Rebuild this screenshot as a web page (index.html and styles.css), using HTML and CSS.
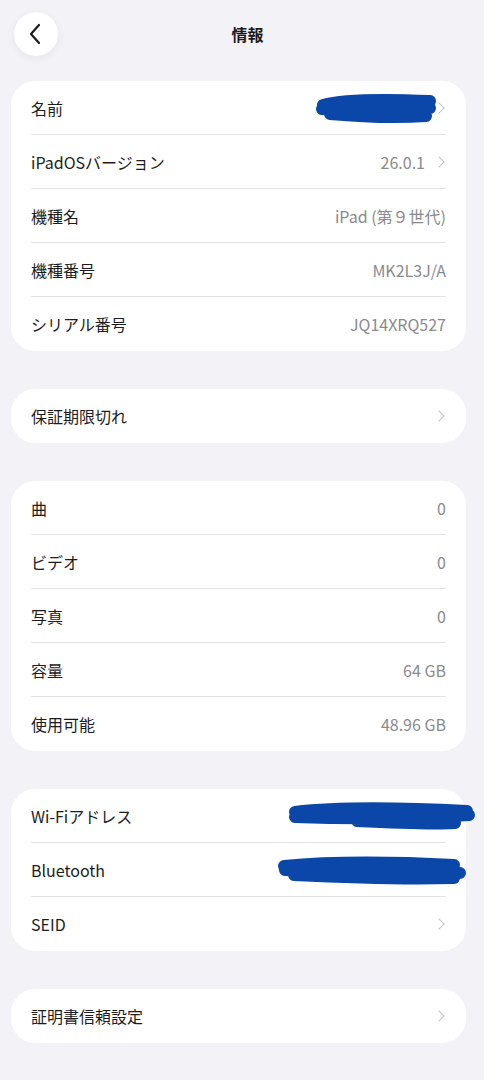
FILE: index.html
```html
<!DOCTYPE html>
<html lang="ja">
<head>
    <meta charset="UTF-8">
    <meta name="viewport" content="width=device-width, initial-scale=1.0">
    <title>情報</title>
    <link rel="stylesheet" href="styles.css">
</head>
<body>
    <div class="page">
        <!-- Navigation bar -->
        <div class="nav">
            <div class="back">
                <svg width="14" height="22" viewBox="0 0 14 22"><path d="M11 2 L3 11 L11 20" fill="none" stroke="#1c1c1e" stroke-width="2.2" stroke-linecap="round" stroke-linejoin="round"/></svg>
            </div>
            <div class="title">情報</div>
        </div>

        <div class="group">
            <div class="row">
                <div class="label">名前</div>
                <div class="value"><span class="chev"></span></div>
                <svg class="scribble s-name" width="126" height="32" viewBox="0 0 126 32">
                    <path d="M9 12 C30 6 70 6 116 8 M8 16 C45 19 80 18 116 15 M16 21 C50 24 85 25 112 23" fill="none" stroke="#0a47a8" stroke-width="12" stroke-linecap="round"/>
                </svg>
            </div>
            <div class="row">
                <div class="label">iPadOSバージョン</div>
                <div class="value">26.0.1<span class="chev"></span></div>
            </div>
            <div class="row">
                <div class="label">機種名</div>
                <div class="value">iPad (第９世代)</div>
            </div>
            <div class="row">
                <div class="label">機種番号</div>
                <div class="value">MK2L3J/A</div>
            </div>
            <div class="row">
                <div class="label">シリアル番号</div>
                <div class="value">JQ14XRQ527</div>
            </div>
        </div>

        <div class="group">
            <div class="row">
                <div class="label">保証期限切れ</div>
                <div class="value"><span class="chev"></span></div>
            </div>
        </div>

        <div class="group">
            <div class="row">
                <div class="label">曲</div>
                <div class="value">0</div>
            </div>
            <div class="row">
                <div class="label">ビデオ</div>
                <div class="value">0</div>
            </div>
            <div class="row">
                <div class="label">写真</div>
                <div class="value">0</div>
            </div>
            <div class="row">
                <div class="label">容量</div>
                <div class="value">64 GB</div>
            </div>
            <div class="row">
                <div class="label">使用可能</div>
                <div class="value">48.96 GB</div>
            </div>
        </div>

        <div class="group">
            <div class="row">
                <div class="label">Wi-Fiアドレス</div>
                <div class="value"></div>
                <svg class="scribble s-wifi" width="190" height="32" viewBox="0 0 190 32">
                    <path d="M8 12 C50 7 100 7 180 11 M8 17 C60 19 120 19 182 15 M70 21 C110 23 150 24 168 23" fill="none" stroke="#0a47a8" stroke-width="12" stroke-linecap="round"/>
                </svg>
            </div>
            <div class="row">
                <div class="label">Bluetooth</div>
                <div class="value"></div>
                <svg class="scribble s-bt" width="192" height="32" viewBox="0 0 192 32">
                    <path d="M8 11 C60 6 120 7 178 10 M9 15 C60 18 130 18 184 18 M18 20 C80 23 140 24 178 23" fill="none" stroke="#0a47a8" stroke-width="12" stroke-linecap="round"/>
                </svg>
            </div>
            <div class="row">
                <div class="label">SEID</div>
                <div class="value"><span class="chev"></span></div>
            </div>
        </div>

        <div class="group">
            <div class="row">
                <div class="label">証明書信頼設定</div>
                <div class="value"><span class="chev"></span></div>
            </div>
        </div>
    </div>
</body>
</html>
```
FILE: styles.css
```css
body {
    margin: 0;
    background-color: #f2f2f7;
    font-family: 'Noto Sans CJK JP', 'Noto Sans', sans-serif;
    color: #1c1c1e;
}
.page {
    padding: 12px 18px 0 11px;
}
.nav {
    position: relative;
    height: 44px;
    margin-bottom: 25px;
}
.back {
    width: 44px;
    height: 44px;
    margin-left: 3px;
    border-radius: 50%;
    background-color: #fff;
    box-shadow: 0 2px 10px rgba(0, 0, 0, 0.06);
    display: flex;
    align-items: center;
    justify-content: center;
}
.back svg {
    margin-left: -3px;
}
.title {
    position: absolute;
    left: 0;
    right: -18px;
    top: 0;
    line-height: 44px;
    text-align: center;
    font-size: 16px;
    font-weight: 700;
    margin-left: 11px;
    margin-right: 11px;
}
.group {
    background-color: #fff;
    border-radius: 24px;
    padding: 0 20px;
    margin-bottom: 38px;
}
.row {
    position: relative;
    height: 53px;
    display: flex;
    align-items: center;
    justify-content: space-between;
    border-bottom: 1px solid #e3e3e6;
    font-size: 16px;
}
.row:last-child {
    border-bottom: none;
    height: 54px;
}
.label {
    color: #1c1c1e;
}
.value {
    color: #8a8a8e;
    display: flex;
    align-items: center;
}
.chev {
    display: inline-block;
    width: 7px;
    height: 7px;
    border-top: 1.6px solid #c4c4c7;
    border-right: 1.6px solid #c4c4c7;
    transform: rotate(45deg);
    margin-left: 10px;
    margin-right: 3px;
}

/* redaction marks drawn over the values */
.scribble {
    position: absolute;
}
.s-name {
    right: 6px;
    top: 12px;
}
.s-wifi {
    right: -31px;
    top: 11px;
}
.s-bt {
    right: -22px;
    top: 12px;
}
```
